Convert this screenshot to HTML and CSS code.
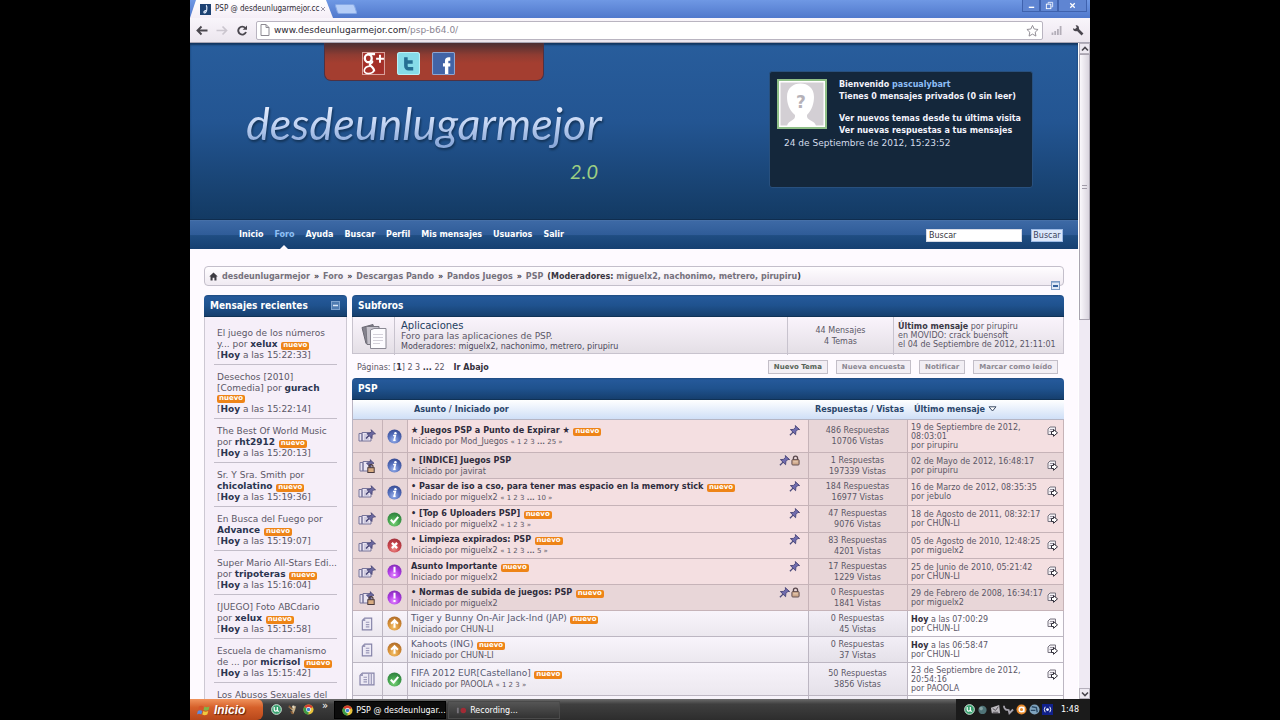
FILE: index.html
```html
<!DOCTYPE html>
<html lang="es">
<head>
<meta charset="utf-8">
<title>PSP @ desdeunlugarmejor.com</title>
<link rel="stylesheet" href="styles.css">
</head>
<body>
<svg class="defs" aria-hidden="true">
  <defs>
    <radialGradient id="g-blue" cx=".45" cy=".75" r=".8"><stop offset="0" stop-color="#9db4ee"/><stop offset=".5" stop-color="#5570bd"/><stop offset="1" stop-color="#33458c"/></radialGradient>
    <radialGradient id="g-green" cx=".45" cy=".75" r=".8"><stop offset="0" stop-color="#7fd67c"/><stop offset=".5" stop-color="#43a24d"/><stop offset="1" stop-color="#2c7a3c"/></radialGradient>
    <radialGradient id="g-red" cx=".45" cy=".75" r=".8"><stop offset="0" stop-color="#ee8a86"/><stop offset=".5" stop-color="#c9434b"/><stop offset="1" stop-color="#9c2f3a"/></radialGradient>
    <radialGradient id="g-violet" cx=".45" cy=".75" r=".8"><stop offset="0" stop-color="#e58cff"/><stop offset=".5" stop-color="#b03be6"/><stop offset="1" stop-color="#7c2aae"/></radialGradient>
    <radialGradient id="g-orange" cx=".45" cy=".75" r=".8"><stop offset="0" stop-color="#f6c46c"/><stop offset=".5" stop-color="#d68f35"/><stop offset="1" stop-color="#a8672a"/></radialGradient>
  </defs>
  <symbol id="i-info" viewBox="0 0 16 16"><circle cx="8" cy="8" r="7.5" fill="url(#g-blue)"/><circle cx="9" cy="4.4" r="1.3" fill="#fff"/><path d="M6.5 7h2.4L7.6 12h1.6" fill="none" stroke="#fff" stroke-width="1.7"/></symbol>
  <symbol id="i-ok" viewBox="0 0 16 16"><circle cx="8" cy="8" r="7.5" fill="url(#g-green)"/><path d="M4 8.2l3 3 5-6" fill="none" stroke="#fff" stroke-width="2.2"/></symbol>
  <symbol id="i-no" viewBox="0 0 16 16"><circle cx="8" cy="8" r="7.5" fill="url(#g-red)"/><path d="M5.2 5.2l5.6 5.6M10.8 5.2l-5.6 5.6" stroke="#fff" stroke-width="2.4"/></symbol>
  <symbol id="i-bang" viewBox="0 0 16 16"><circle cx="8" cy="8" r="7.5" fill="url(#g-violet)"/><path d="M8 3v6M8 10.6v2.2" stroke="#fff" stroke-width="2.2"/></symbol>
  <symbol id="i-up" viewBox="0 0 16 16"><circle cx="8" cy="8" r="7.5" fill="url(#g-orange)"/><path d="M8 12.6V5M4.4 8.2L8 4.4l3.6 3.8" fill="none" stroke="#fff" stroke-width="2.2"/></symbol>
  <symbol id="i-pin" viewBox="0 0 12 12"><path d="M1 11.2l4-4" stroke="#4b4a7c" stroke-width="1.4"/><path d="M1.500 5l3.500-.2 2.200-2.400-.4-1.800L11.600 5l-1.900-.2-2.200 2.400-.3 3.400z" fill="#6f6bae" stroke="#3f3d70" stroke-width=".9"/></symbol>
  <symbol id="i-lock" viewBox="0 0 10 12"><path d="M2.700 6V3.400a2.300 2.300 0 0 1 4.600 0V6" fill="none" stroke="#57454a" stroke-width="1.500"/><rect x="1" y="5" width="8" height="6" rx="1" fill="#cfa98c" stroke="#57454a"/><path d="M2.500 7.500h5" stroke="#ecd5c0"/></symbol>
  <symbol id="i-sticky" viewBox="0 0 18 14"><path d="M1 4.500h3V12H1zM4 3.500h9V12H4z" fill="#e9e4f2" stroke="#77749a"/><path d="M6 6h4M6 8h3M6 10h5" stroke="#b7b3cc"/><path d="M8 9.500l3-3" stroke="#3f3d70" stroke-width="1.300"/><path d="M9 4.600l3-.3L13.500 2.500l-.3-1.800L17.500 5l-1.700-.2-1.600 1.700-.3 3z" fill="#6a679e" stroke="#3f3d70" stroke-width=".8"/></symbol>
  <symbol id="i-stickylock" viewBox="0 0 18 14"><path d="M2 3.500h3V12H2zM5 2.500h8V12H5z" fill="#e9e4f2" stroke="#77749a"/><path d="M8.500 4l2.500-.3L12.500 2l-.3-1.300L16 4.400l-1.500-.2-1.600 1.600-.3 2.700z" fill="#6a679e" stroke="#3f3d70" stroke-width=".8"/><path d="M11 9V7.600a2 2 0 0 1 4 0V9" fill="none" stroke="#4a3a3c" stroke-width="1.200"/><rect x="9.800" y="8.700" width="6.400" height="4.800" fill="#d8ac82" stroke="#4a3a3c"/></symbol>
  <symbol id="i-doc" viewBox="0 0 10 12"><path d="M3 1h6v10H1V3z" fill="#edeaf5" stroke="#8583a8"/><path d="M1 3h2V1M4 4.500h3M4 6.500h3M4 8.500h3" fill="none" stroke="#9a98b8"/></symbol>
  <symbol id="i-docs" viewBox="0 0 14 12"><path d="M3 1h10v10H1V3z" fill="#edeaf5" stroke="#8583a8"/><path d="M1 3h2V1M8.500 1v10M10.700 1v10M4 4.500h3M4 6.500h3M4 8.500h3" fill="none" stroke="#9a98b8"/></symbol>
  <symbol id="i-last" viewBox="0 0 11 11"><path d="M3 1h5.500v7.500H1V3z" fill="#f3f0f5" stroke="#77737f"/><path d="M3 3.500h4M2.500 5.500h2" stroke="#9a96a2"/><path d="M4.500 5.500h2V3.500l4 3.300-4 3.500V8.500h-2z" fill="#fff" stroke="#2e2c38"/></symbol>
  <symbol id="i-chrome" viewBox="0 0 12 12"><circle cx="6" cy="6" r="5.500" fill="#e8c33a"/><path d="M6 6L1.200 3.300A5.500 5.500 0 0 1 10.800 3.300z" fill="#d63c30"/><path d="M6 6L1.200 3.300A5.500 5.500 0 0 0 6 11.500z" fill="#3c9c48"/><circle cx="6" cy="6" r="2.600" fill="#fff"/><circle cx="6" cy="6" r="1.900" fill="#3e7fd0"/></symbol>
  <symbol id="i-ut" viewBox="0 0 12 12"><circle cx="6" cy="6" r="5.300" fill="#37a06e" stroke="#dff3e8"/><path d="M3.500 3.200v3c0 2 2.800 2 3.400.4V3.200M6.900 6c0 1.600.6 2.200 2 1.800" fill="none" stroke="#fff" stroke-width="1.300"/></symbol>
  <symbol id="i-collapse" viewBox="0 0 9 9"><rect x=".5" y=".5" width="8" height="8" fill="#dfe9f6" stroke="#7d9cc4"/><path d="M1 1.500h7" stroke="#9db8da"/><path d="M2 5h5" stroke="#34619c" stroke-width="2"/></symbol>
</svg>

<div class="window">
  <div class="titlebar">
    <div class="tab">
      <svg class="favicon" viewBox="0 0 12 12"><rect width="12" height="12" fill="#1d4272"/><path d="M6.500 1.500c1.500.5 1 3 .8 5S5.500 10.500 4.500 9.500 5.500 7 7 7" fill="none" stroke="#dfe9fa" stroke-width="1.300"/></svg>
      <span class="tab-title">PSP @ desdeunlugarmejor.cc</span>
      <svg class="tab-close" viewBox="0 0 6 6"><path d="M1 1l4 4M5 1L1 5" stroke="#9a96a6"/></svg>
    </div>
    <div class="newtab"></div>
    <div class="winbtns">
      <button aria-label="Minimizar"><svg viewBox="0 0 10 10"><path d="M2 7h6" stroke="#fff" stroke-width="1.500"/></svg></button>
      <button aria-label="Restaurar"><svg viewBox="0 0 10 10"><path d="M3.500 3V1.500h5v5H7" fill="none" stroke="#e8efff"/><rect x="1.500" y="3.500" width="5" height="5" fill="none" stroke="#fff"/></svg></button>
      <button aria-label="Cerrar" class="wide"><svg viewBox="0 0 10 10"><path d="M2.500 2.500l5 5M7.500 2.500l-5 5" stroke="#fff" stroke-width="1.400"/></svg></button>
    </div>
  </div>

  <div class="toolbar">
    <button aria-label="Atrás"><svg viewBox="0 0 12 10"><path d="M11.500 5H2M5.500 1L1.500 5l4 4" fill="none" stroke="#4a474e" stroke-width="1.900"/></svg></button>
    <button aria-label="Adelante"><svg viewBox="0 0 12 10"><path d="M.5 5H10M6.500 1l4 4-4 4" fill="none" stroke="#cbc6cf" stroke-width="1.700"/></svg></button>
    <button aria-label="Recargar"><svg viewBox="0 0 12 11"><path d="M9.300 3A4 4 0 1 0 10 7" fill="none" stroke="#4a474e" stroke-width="1.900"/><path d="M11 .5v4.300H6.700z" fill="#4a474e"/></svg></button>
    <div class="address">
      <svg class="page-ico" viewBox="0 0 10 12"><path d="M1 .5h5l3 3v8H1zM6 .5v3h3" fill="#fff" stroke="#8d8a92"/></svg>
      <span class="url">www.desdeunlugarmejor.com<span class="path">/psp-b64.0/</span></span>
      <svg class="star" viewBox="0 0 14 13"><path d="M7 1l1.800 3.900 4.200.5-3.100 2.900.8 4.200L7 10.400l-3.700 2.100.8-4.200L1 5.400l4.200-.5z" fill="#fff" stroke="#8a878f"/></svg>
    </div>
    <svg class="bars" viewBox="0 0 11 9"><path d="M1.500 9V6.500M4.200 9V5M6.900 9V3M9.600 9V0" stroke="#b3aeb8" stroke-width="1.800"/></svg>
    <svg class="wrench" viewBox="0 0 12 12"><path d="M4.500 4.500l6 6" stroke="#4a474e" stroke-width="2.600"/><path d="M3.600 1.200A3 3 0 1 1 1 4.200l2 .9 1.800-1.600z" fill="#4a474e"/></svg>
  </div>

  <div class="viewport">
    <div class="page">
      <header class="header">
        <div class="social">
          <a href="#" aria-label="Google+"><svg viewBox="0 0 22 22"><rect x=".5" y=".5" width="21" height="21" fill="#a52f28" stroke="#d9a29c"/><ellipse cx="6" cy="6" rx="3.300" ry="3.800" fill="none" stroke="#fff" stroke-width="2.200"/><path d="M5 2h7.500M9.500 8.500c1.500 2-3.500 2.500-1.500 4.500 2 1.500 4 3 3.500 5.500" fill="none" stroke="#fff" stroke-width="2.200"/><path d="M7.500 13.500C1.500 14 0 20.500 6 20.500c3 0 5-1 5.500-3" fill="none" stroke="#fff" stroke-width="1.500"/><path d="M13.500 6.500H21M17.200 2.700v7.600" stroke="#fff" stroke-width="1.900"/></svg></a>
          <a href="#" aria-label="Twitter"><svg viewBox="0 0 22 22"><rect x=".5" y=".5" width="21" height="21" rx="2" fill="#86dbe8" stroke="#b9f0f5"/><path d="M8.500 5v8.500a2.500 2.500 0 0 0 2.500 2.500h4.500M8.500 9.500h6.500" fill="none" stroke="#256f93" stroke-width="3.400"/></svg></a>
          <a href="#" aria-label="Facebook"><svg viewBox="0 0 22 22"><rect x=".5" y=".5" width="21" height="21" rx="1" fill="#4264a6" stroke="#8ea5d0"/><path d="M17.500 6.700h-1.500q-2 0-2 2V21M10.500 12.300h7" fill="none" stroke="#fff" stroke-width="3.200"/></svg></a>
        </div>
        <div class="brand">
          <a href="#" class="logo">desdeunlugarmejor</a>
          <span class="version">2.0</span>
        </div>
        <div class="userbox">
          <svg class="avatar" viewBox="0 0 50 50"><rect x="1" y="1" width="48" height="48" fill="#fff" stroke="#8fbf87" stroke-width="2"/><rect x="3.500" y="3.500" width="43" height="43" fill="#d3cfd4"/><path d="M10 47c1-6 9-5 8-11-6-5-8-12-8-18C10 9 16 4.500 23.500 4.500S37 9 37 18c0 6-2 13-7 18-1 6 8 5 9 11z" fill="#fff"/><text x="24" y="29" text-anchor="middle" class="qmark">?</text></svg>
          <div class="welcome">
            <p>Bienvenido <a href="#">pascualybart</a></p>
            <p>Tienes 0 mensajes privados (0 sin leer)</p>
            <p class="gap">Ver nuevos temas desde tu última visita</p>
            <p>Ver nuevas respuestas a tus mensajes</p>
          </div>
          <p class="date">24 de Septiembre de 2012, 15:23:52</p>
        </div>
      </header>

      <nav class="nav">
        <a href="#">Inicio</a><a href="#" class="active">Foro</a><a href="#">Ayuda</a><a href="#">Buscar</a><a href="#">Perfil</a><a href="#">Mis mensajes</a><a href="#">Usuarios</a><a href="#">Salir</a>
        <form class="search"><input type="text" value="Buscar" aria-label="Buscar"><button type="button">Buscar</button></form>
      </nav>

      <div class="content">
        <div class="crumbs">
          <svg viewBox="0 0 10 10"><path d="M5 .5L.3 5h1.400v4.500h2.300v-3h2v3h2.300V5h1.400z" fill="#3d3b42"/></svg>
          <a href="#">desdeunlugarmejor</a><b>»</b><a href="#">Foro</a><b>»</b><a href="#">Descargas Pando</a><b>»</b><a href="#">Pandos Juegos</a><b>»</b><a href="#">PSP</a>
          <span class="mods"><b>(Moderadores:</b> <a href="#">miguelx2</a>, <a href="#">nachonimo</a>, <a href="#">metrero</a>, <a href="#">pirupiru</a><b>)</b></span>
          <svg class="collapse-all"><use href="#i-collapse"/></svg>
        </div>

        <div class="columns">
          <aside class="sidebar">
            <h3 class="bar">Mensajes recientes <svg class="mini" viewBox="0 0 9 9"><rect x=".5" y=".5" width="8" height="8" fill="#4f7cb2" stroke="#7ea3cf"/><path d="M2 4.500h5" stroke="#dbe8f8" stroke-width="1.500"/></svg></h3>
            <ul class="recent">
              <li>El juego de los números<br>y... por <b>xelux</b> <i class="new">nuevo</i><br><small>[<b>Hoy</b> a las 15:22:33]</small></li>
              <li>Desechos [2010]<br>[Comedia] por <b>gurach</b><br><i class="new alone">nuevo</i><small>[<b>Hoy</b> a las 15:22:14]</small></li>
              <li>The Best Of World Music<br>por <b>rht2912</b> <i class="new">nuevo</i><br><small>[<b>Hoy</b> a las 15:20:13]</small></li>
              <li>Sr. Y Sra. Smith por<br><b>chicolatino</b> <i class="new">nuevo</i><br><small>[<b>Hoy</b> a las 15:19:36]</small></li>
              <li>En Busca del Fuego por<br><b>Advance</b> <i class="new">nuevo</i><br><small>[<b>Hoy</b> a las 15:19:07]</small></li>
              <li>Super Mario All-Stars Edi...<br>por <b>tripoteras</b> <i class="new">nuevo</i><br><small>[<b>Hoy</b> a las 15:16:04]</small></li>
              <li>[JUEGO] Foto ABCdario<br>por <b>xelux</b> <i class="new">nuevo</i><br><small>[<b>Hoy</b> a las 15:15:58]</small></li>
              <li>Escuela de chamanismo<br>de ... por <b>micrisol</b> <i class="new">nuevo</i><br><small>[<b>Hoy</b> a las 15:15:42]</small></li>
              <li>Los Abusos Sexuales del</li>
            </ul>
          </aside>

          <main class="main">
            <h3 class="bar">Subforos</h3>
            <div class="subforum">
              <div class="sf-icon"><svg viewBox="0 0 26 26"><path d="M1 4l11-3 3 16-10 3z" fill="#85838e" stroke="#6a6873"/><path d="M5 3h13v18H6z" fill="#c4c1ca" stroke="#77757f"/><path d="M9.500 6.500L13 5h12v20H9.500z" fill="#fdfcff" stroke="#8b8994"/><path d="M12 11h10M12 14h10M12 17h10M12 20h7" stroke="#d4d1da"/></svg></div>
              <div class="sf-info"><a href="#" class="sf-name">Aplicaciones</a><p class="sf-desc">Foro para las aplicaciones de PSP.</p><p class="sf-mods">Moderadores: <a href="#">miguelx2</a>, <a href="#">nachonimo</a>, <a href="#">metrero</a>, <a href="#">pirupiru</a></p></div>
              <div class="sf-stats">44 Mensajes<br>4 Temas</div>
              <div class="sf-last"><b>Último mensaje</b> por <a href="#">pirupiru</a><br>en <a href="#">MOVIDO: crack buensoft</a><br>el 04 de Septiembre de 2012, 21:11:01</div>
            </div>

            <div class="pager">
              <span>Páginas: [<b>1</b>] <a href="#">2</a> <a href="#">3</a> <b>...</b> <a href="#">22</a></span><a href="#" class="down">Ir Abajo</a>
              <div class="actions"><button class="strong">Nuevo Tema</button><button>Nueva encuesta</button><button>Notificar</button><button>Marcar como leído</button></div>
            </div>

            <h3 class="bar">PSP</h3>
            <table class="topics">
              <colgroup><col class="c-ico"><col class="c-type"><col><col class="c-stats"><col class="c-last"></colgroup>
              <thead><tr><th></th><th></th><th class="left">Asunto / Iniciado por</th><th>Respuestas / Vistas</th><th class="left">Último mensaje <svg class="sort" viewBox="0 0 9 6"><path d="M1 .8h7L4.500 5z" fill="#fff" stroke="#3b4a63"/></svg></th></tr></thead>
              <tbody>
              <tr class="sticky tall"><td class="ico"><svg><use href="#i-sticky"/></svg></td><td class="type"><svg><use href="#i-info"/></svg></td><td class="subj"><span class="flags"><svg class="pin"><use href="#i-pin"/></svg></span><a href="#">★ Juegos PSP a Punto de Expirar ★</a> <i class="new">nuevo</i><p>Iniciado por <a href="#">Mod_Juegos</a> <span class="pg">« 1 2 3 <b>...</b> 25 »</span></p></td><td class="stats">486 Respuestas<br>10706 Vistas</td><td class="last"><svg><use href="#i-last"/></svg>19 de Septiembre de 2012,<br>08:03:01<br>por <a href="#">pirupiru</a></td></tr>
              <tr class="sticky locked"><td class="ico"><svg><use href="#i-stickylock"/></svg></td><td class="type"><svg><use href="#i-info"/></svg></td><td class="subj"><span class="flags"><svg class="pin"><use href="#i-pin"/></svg><svg class="lock"><use href="#i-lock"/></svg></span><a href="#">• [INDICE] Juegos PSP</a><p>Iniciado por <a href="#">javirat</a></p></td><td class="stats">1 Respuestas<br>197339 Vistas</td><td class="last"><svg><use href="#i-last"/></svg>02 de Mayo de 2012, 16:48:17<br>por <a href="#">pirupiru</a></td></tr>
              <tr class="sticky mid"><td class="ico"><svg><use href="#i-sticky"/></svg></td><td class="type"><svg><use href="#i-info"/></svg></td><td class="subj"><span class="flags"><svg class="pin"><use href="#i-pin"/></svg></span><a href="#">• Pasar de iso a cso, para tener mas espacio en la memory stick</a> <i class="new">nuevo</i><p>Iniciado por <a href="#">miguelx2</a> <span class="pg">« 1 2 3 <b>...</b> 10 »</span></p></td><td class="stats">184 Respuestas<br>16977 Vistas</td><td class="last"><svg><use href="#i-last"/></svg>16 de Marzo de 2012, 08:35:35<br>por <a href="#">jebulo</a></td></tr>
              <tr class="sticky mid"><td class="ico"><svg><use href="#i-sticky"/></svg></td><td class="type"><svg><use href="#i-ok"/></svg></td><td class="subj"><span class="flags"><svg class="pin"><use href="#i-pin"/></svg></span><a href="#">• [Top 6 Uploaders PSP]</a> <i class="new">nuevo</i><p>Iniciado por <a href="#">miguelx2</a> <span class="pg">« 1 2 3 »</span></p></td><td class="stats">47 Respuestas<br>9076 Vistas</td><td class="last"><svg><use href="#i-last"/></svg>18 de Agosto de 2011, 08:32:17<br>por <a href="#">CHUN-LI</a></td></tr>
              <tr class="sticky"><td class="ico"><svg><use href="#i-sticky"/></svg></td><td class="type"><svg><use href="#i-no"/></svg></td><td class="subj"><span class="flags"><svg class="pin"><use href="#i-pin"/></svg></span><a href="#">• Limpieza expirados: PSP</a> <i class="new">nuevo</i><p>Iniciado por <a href="#">miguelx2</a> <span class="pg">« 1 2 3 <b>...</b> 5 »</span></p></td><td class="stats">83 Respuestas<br>4201 Vistas</td><td class="last"><svg><use href="#i-last"/></svg>05 de Agosto de 2010, 12:48:25<br>por <a href="#">miguelx2</a></td></tr>
              <tr class="sticky"><td class="ico"><svg><use href="#i-sticky"/></svg></td><td class="type"><svg><use href="#i-bang"/></svg></td><td class="subj"><span class="flags"><svg class="pin"><use href="#i-pin"/></svg></span><a href="#">Asunto Importante</a> <i class="new">nuevo</i><p>Iniciado por <a href="#">miguelx2</a></p></td><td class="stats">17 Respuestas<br>1229 Vistas</td><td class="last"><svg><use href="#i-last"/></svg>25 de Junio de 2010, 05:21:42<br>por <a href="#">CHUN-LI</a></td></tr>
              <tr class="sticky locked"><td class="ico"><svg><use href="#i-stickylock"/></svg></td><td class="type"><svg><use href="#i-bang"/></svg></td><td class="subj"><span class="flags"><svg class="pin"><use href="#i-pin"/></svg><svg class="lock"><use href="#i-lock"/></svg></span><a href="#">• Normas de subida de juegos: PSP</a> <i class="new">nuevo</i><p>Iniciado por <a href="#">miguelx2</a></p></td><td class="stats">0 Respuestas<br>1841 Vistas</td><td class="last"><svg><use href="#i-last"/></svg>29 de Febrero de 2008, 16:34:17<br>por <a href="#">miguelx2</a></td></tr>
              <tr><td class="ico"><svg><use href="#i-doc"/></svg></td><td class="type"><svg><use href="#i-up"/></svg></td><td class="subj"><a href="#">Tiger y Bunny On-Air Jack-Ind (JAP)</a> <i class="new">nuevo</i><p>Iniciado por <a href="#">CHUN-LI</a></p></td><td class="stats">0 Respuestas<br>45 Vistas</td><td class="last"><svg><use href="#i-last"/></svg><b>Hoy</b> a las 07:00:29<br>por <a href="#">CHUN-LI</a></td></tr>
              <tr><td class="ico"><svg><use href="#i-doc"/></svg></td><td class="type"><svg><use href="#i-up"/></svg></td><td class="subj"><a href="#">Kahoots (ING)</a> <i class="new">nuevo</i><p>Iniciado por <a href="#">CHUN-LI</a></p></td><td class="stats">0 Respuestas<br>37 Vistas</td><td class="last"><svg><use href="#i-last"/></svg><b>Hoy</b> a las 06:58:47<br>por <a href="#">CHUN-LI</a></td></tr>
              <tr class="tall"><td class="ico"><svg><use href="#i-docs"/></svg></td><td class="type"><svg><use href="#i-ok"/></svg></td><td class="subj"><a href="#">FIFA 2012 EUR[Castellano]</a> <i class="new">nuevo</i><p>Iniciado por <a href="#">PAOOLA</a> <span class="pg">« 1 2 3 »</span></p></td><td class="stats">50 Respuestas<br>3856 Vistas</td><td class="last"><svg><use href="#i-last"/></svg>23 de Septiembre de 2012,<br>20:54:16<br>por <a href="#">PAOOLA</a></td></tr>
              <tr><td></td><td></td><td></td><td class="stats"></td><td class="last"></td></tr>
              </tbody>
            </table>
          </main>
        </div>
      </div>
    </div>
    <div class="scrollbar">
      <div class="sb-btn"><svg viewBox="0 0 8 6"><path d="M1 4.500L4 1.500l3 3" fill="none" stroke="#4a474e" stroke-width="1.600"/></svg></div>
      <div class="thumb"><i></i></div>
      <div class="sb-btn end"><svg viewBox="0 0 8 6"><path d="M1 1.500l3 3 3-3" fill="none" stroke="#4a474e" stroke-width="1.600"/></svg></div>
    </div>
  </div>

  <div class="taskbar">
    <button class="start"><svg viewBox="0 0 14 12"><path d="M2 2.500c1.500-1 3-1 4.500 0L5.500 6C4 5 2.500 5 1 6z" fill="#d5552a"/><path d="M7.500 2.500c1.500 1 3 1 5 0L11.500 6c-2 1-3.500 1-5 0z" fill="#7fb64a"/><path d="M.8 7c1.500-1 3-1 4.500 0L4.300 10.500c-1.500-1-3-1-4.300 0z" fill="#5c8be0"/><path d="M6.300 7c1.500 1 3 1 5 0l-1 3.500c-2 1-3.500 1-5 0z" fill="#f0c93e"/></svg>Inicio</button>
    <div class="quick">
      <svg><use href="#i-ut"/></svg>
      <svg viewBox="0 0 12 12"><path d="M1 3l5 2 4-3-1 4-2 5H5l1-4z" fill="#c8b088"/><circle cx="7" cy="3" r="1.500" fill="#e8dcc0"/><path d="M2 2l3 3M4 8l3 3" stroke="#8a5c34" stroke-width="1.500"/></svg>
      <svg><use href="#i-chrome"/></svg>
    </div>
    <span class="more">»</span>
    <button class="task current"><svg><use href="#i-chrome"/></svg>PSP @ desdeunlugar...</button>
    <button class="task"><svg viewBox="0 0 12 12"><path d="M2 3v6" stroke="#77737a" stroke-width="2"/><circle cx="8" cy="6" r="3" fill="#a22b35"/></svg>Recording...</button>
    <div class="tray">
      <svg><use href="#i-ut"/></svg>
      <svg viewBox="0 0 12 12"><circle cx="6" cy="6.500" r="4.500" fill="#4f7377"/><circle cx="4.500" cy="5" r="2" fill="#85a3a4"/></svg>
      <svg viewBox="0 0 12 12"><path d="M1 4l9-3 1 9H2z" fill="#bcb9be"/><path d="M3 5l3 2 3-4M3 9h6" fill="none" stroke="#4a474e"/></svg>
      <svg viewBox="0 0 12 12"><path d="M1 2c0 4 3 5 5 4M6 6l1 4 4-4" fill="none" stroke="#a5a2ac" stroke-width="2"/></svg>
      <svg viewBox="0 0 12 12"><circle cx="6" cy="6" r="5.500" fill="#e98a2b"/><circle cx="6" cy="6" r="2.500" fill="none" stroke="#fff" stroke-width="1.600"/><path d="M8.500 3v6" stroke="#fff" stroke-width="1.600"/></svg>
      <svg viewBox="0 0 12 12"><circle cx="6" cy="6" r="5.500" fill="#7fa3bd"/><path d="M3 3l5 1 1 5M2 7h5" fill="none" stroke="#2b4a66" stroke-width="1.500"/></svg>
      <svg viewBox="0 0 12 12"><rect width="12" height="12" fill="#10208a"/><circle cx="6" cy="6" r="1.500" fill="#fff"/><path d="M3.500 3q-2 3 0 6M8.500 3q2 3 0 6" fill="none" stroke="#fff"/></svg>
      <time>1:48</time>
    </div>
  </div>
</div>
</body>
</html>
```

FILE: styles.css
```css
* { box-sizing: border-box; }
body {
  margin: 0;
  padding: 0 190px;
  background: #000;
  font-family: "DejaVu Sans", sans-serif;
  font-size: 8px;
  line-height: 11px;
  color: #5b5766;
}
p, h3, ul { margin: 0; padding: 0; }
a { color: inherit; text-decoration: none; }
button { font-family: inherit; }
svg { display: block; flex: none; }
.defs { position: absolute; width: 0; height: 0; }
.window { display: flex; flex-direction: column; height: 100vh; overflow: hidden; }

/* Browser chrome */
.titlebar {
  display: flex;
  height: 18px;
  flex: none;
  background: linear-gradient(#6f98e4, #5078cc);
}
.tab {
  display: flex;
  align-items: center;
  gap: 4px;
  width: 143px;
  padding: 0 10px;
  background: linear-gradient(#fff, #f5eef7);
  clip-path: polygon(0 100%, 6px 0, 136px 0, 100% 100%);
}
.favicon { width: 11px; height: 11px; }
.tab-title {
  width: 101px;
  white-space: nowrap;
  font: 8px/12px "DejaVu Sans Condensed", "DejaVu Sans", sans-serif;
  color: #2d2a33;
}
.tab-close { width: 6px; height: 6px; }
.newtab {
  width: 20px;
  height: 10px;
  margin: 4px 0 0 3px;
  background: #b5cdf7;
  border: 1px solid #86a8e6;
  border-radius: 2px;
  transform: skewX(18deg);
}
.winbtns { display: flex; margin-left: auto; margin-right: 3px; height: 12px; }
.winbtns button {
  display: flex;
  align-items: center;
  justify-content: center;
  width: 18px;
  padding: 0;
  background: #5f85d2;
  border: 1px solid #3f62ae;
  border-top: 0;
}
.winbtns .wide { width: 29px; }
.winbtns svg { width: 9px; height: 9px; }
.toolbar {
  display: flex;
  align-items: center;
  height: 25px;
  flex: none;
  padding: 0 6px;
  gap: 8px;
  background: linear-gradient(#f9f5fb, #ece6ee);
  border-bottom: 1px solid #a9a6b4;
}
.toolbar button { padding: 0; border: 0; background: none; }
.toolbar button svg { width: 12px; height: 11px; }
.address {
  flex: 1;
  display: flex;
  align-items: center;
  gap: 4px;
  height: 19px;
  padding: 0 3px;
  background: #fff;
  border: 1px solid #b9b4c0;
  border-radius: 2px;
}
.page-ico { width: 10px; height: 12px; }
.url { flex: 1; font-size: 9px; color: #2d2a33; }
.path { color: #8a8592; }
.star { width: 13px; height: 13px; }
.bars { width: 11px; height: 9px; margin: 0 2px 0 0; }
.wrench { width: 12px; height: 12px; }

.viewport { flex: 1; min-height: 0; display: flex; overflow: hidden; }
.page { flex: 1; min-width: 0; background: #fefaff; }
.scrollbar {
  display: flex;
  flex-direction: column;
  width: 12px;
  background: #efeaf3;
  border-left: 1px solid #fff;
}
.sb-btn {
  display: flex;
  align-items: center;
  justify-content: center;
  height: 11px;
  background: #eeeaf2;
  border: 1px solid #b5b0bb;
}
.sb-btn svg { width: 8px; height: 6px; }
.sb-btn.end { margin-top: auto; }
.thumb {
  display: flex;
  align-items: center;
  justify-content: center;
  height: 266px;
  background: linear-gradient(90deg, #faf8fc, #d9d4de);
  border: 1px solid #a9a4b0;
}
.thumb i { width: 5px; height: 4px; border: solid #a09ba8; border-width: 1px 0; }

/* Forum header */
.header {
  display: flex;
  justify-content: space-between;
  position: relative;
  height: 177px;
  padding: 28px 45px 0 56px;
  background: linear-gradient(#285d9c, #235592 45%, #133a63);
  border-bottom: 1px solid #0f2d4f;
  box-shadow: inset 0 2px 2px #12355f;
}
.social {
  position: absolute;
  top: 0;
  left: 134px;
  display: flex;
  gap: 12px;
  width: 220px;
  height: 38px;
  padding: 9px 0 0 37px;
  background: linear-gradient(#4b2f33, #8f3c32 12px, #a43e30 20px);
  border: solid #4f3142;
  border-width: 0 1px 1px;
  border-radius: 0 0 7px 7px;
}
.social svg { width: 23px; height: 23px; }
.brand { width: 360px; padding-top: 22px; }
.logo {
  display: block;
  font: italic 45px/60px Lato, sans-serif;
  background: linear-gradient(#eef3ff 15%, #c5d6f4 50%, #8ba9da 85%);
  background-clip: text;
  color: transparent;
  filter: drop-shadow(1px 2px 1px #123256);
}
.version {
  display: block;
  padding-right: 8px;
  text-align: right;
  font: italic 20px/36px Lato, sans-serif;
  color: #9dcf83;
}
.userbox {
  display: grid;
  grid-template-columns: 50px 1fr;
  align-content: start;
  column-gap: 12px;
  width: 264px;
  height: 117px;
  padding: 7px;
  background: #14273b;
  border: 1px solid #28507e;
  border-radius: 3px;
  color: #f3f3fb;
}
.avatar { width: 50px; height: 50px; }
.qmark { font: bold 17px "DejaVu Sans", sans-serif; fill: #b5b1b8; }
.welcome { font-weight: bold; line-height: 12px; white-space: nowrap; }
.welcome a { color: #8dbdf5; }
.welcome .gap { padding-top: 10px; }
.date { grid-column: 1 / -1; padding-left: 7px; line-height: 12px; color: #d3dcea; font-size: 9px; }

.nav {
  display: flex;
  align-items: center;
  gap: 11px;
  height: 29px;
  padding: 0 15px 0 49px;
  background: linear-gradient(#3d69a5, #2f5c98 50%, #1f4d82 52%, #164071);
  border-top: 1px solid #4670a8;
  font-weight: bold;
  color: #fff;
}
.nav a { position: relative; line-height: 28px; }
.nav .active { color: #8fc0f5; }
.nav .active::after {
  content: "";
  position: absolute;
  left: 50%;
  bottom: 0;
  margin-left: -4px;
  border: 4px solid transparent;
  border-top: 0;
  border-bottom-color: #fefaff;
}
.search { display: flex; gap: 9px; margin-left: auto; }
.search input {
  width: 96px;
  height: 13px;
  padding: 0 2px;
  border: 1px solid #d7dbe6;
  background: #fff;
  font: 8px/11px "DejaVu Sans", sans-serif;
  color: #3a3742;
}
.search button {
  width: 32px;
  height: 13px;
  padding: 0;
  border: 1px solid #9ebbe6;
  background: #dbe7fa;
  font-size: 8px;
  line-height: 11px;
  color: #3a4460;
}

.content { padding: 17px 14px 0; }
.crumbs {
  position: relative;
  display: flex;
  align-items: center;
  gap: 4px;
  height: 20px;
  padding: 0 4px;
  border: 1px solid #c4bfcb;
  border-radius: 4px;
  background: linear-gradient(#fffdff, #f0eaf2);
  font-weight: bold;
  color: #75717c;
}
.crumbs > svg { width: 9px; height: 9px; }
.crumbs b { color: #38353f; }
.crumbs .collapse-all { position: absolute; right: 3px; bottom: -5px; }

.columns { display: flex; gap: 5px; padding-top: 9px; }
.sidebar { width: 143px; flex: none; }
.main { flex: 1; min-width: 0; }
.bar {
  display: flex;
  align-items: center;
  justify-content: space-between;
  height: 22px;
  padding: 0 7px 0 6px;
  border-radius: 4px 4px 0 0;
  background: linear-gradient(#1f4a80, #25599a 2px, #1f528e 50%, #163f6e);
  border-bottom: 1px solid #103256;
  font: bold 10px/12px "DejaVu Sans Condensed", "DejaVu Sans", sans-serif;
  color: #fff;
}
.mini { width: 9px; height: 9px; }
.recent {
  padding: 4px 9px 20px;
  list-style: none;
  border: solid #cdc8d3;
  border-width: 0 1px;
  background: #f6eff9;
  font-size: 9px;
}
.recent li {
  padding: 7px 0 3px 3px;
  border-bottom: 1px solid #c3bdc9;
  white-space: nowrap;
}
.recent b { color: #2c3550; }
.recent small { font-size: 9px; line-height: 11px; }
.new {
  display: inline-block;
  width: 28px;
  height: 8px;
  margin-left: 1px;
  border-radius: 2px;
  background: #ee8417;
  color: #fff;
  font: bold 7px/7px "DejaVu Sans", sans-serif;
  text-align: center;
  vertical-align: 0;
}
.new.alone { display: block; margin: 1px 0 1px; }

.subforum {
  display: grid;
  grid-template-columns: 41px 1fr 106px 170px;
  height: 37px;
  border: 1px solid #c8c3ce;
  border-top: 0;
  background: linear-gradient(#faf4fc, #e4dfe6);
}
.subforum > div + div { border-left: 1px solid #c8c3ce; }
.sf-icon { display: flex; align-items: center; justify-content: center; }
.sf-icon svg { width: 26px; height: 27px; }
.sf-info { padding: 3px 6px; }
.sf-name { display: block; font-size: 10px; line-height: 11px; color: #23405f; }
.sf-desc { font-size: 9px; line-height: 10px; }
.sf-mods { line-height: 11px; font-size: 8px; color: #4a4759; }
.sf-stats { padding-top: 8px; text-align: center; }
.sf-last { padding: 5px 4px; line-height: 9px; white-space: nowrap; }
.sf-last b { color: #3b3845; }

.pager { display: flex; align-items: center; gap: 9px; height: 24px; padding: 2px 6px 0 5px; }
.pager b, .down { color: #33303c; font-weight: bold; }
.actions { display: flex; gap: 8px; margin-left: auto; }
.actions button {
  height: 14px;
  padding: 0 5px;
  border: 1px solid #c3bec8;
  background: #f2eef4;
  font-size: 7px;
  line-height: 12px;
  font-weight: bold;
  color: #8b8791;
}
.actions .strong { color: #566356; }

.topics { width: 100%; table-layout: fixed; border-collapse: separate; border-spacing: 0; border-left: 1px solid #b9b4c2; }
.c-ico { width: 30px; }
.c-type { width: 25px; }
.c-stats { width: 99px; }
.c-last { width: 156px; }
.topics th {
  height: 20px;
  padding: 0 6px;
  background: linear-gradient(#fff, #cfdff7);
  border-bottom: 1px solid #b5b5c4;
  font: bold 9px/11px "DejaVu Sans Condensed", "DejaVu Sans", sans-serif;
  color: #2b466b;
  white-space: nowrap;
}
.topics .left { text-align: left; }
.sort { display: inline-block; width: 9px; height: 6px; }
.topics td {
  height: 26px;
  padding: 0 4px 0 3px;
  border: solid #bcb6c2;
  border-width: 0 1px 1px 0;
  background: linear-gradient(#f8f4fb, #ece8ef);
  white-space: nowrap;
}
.topics .tall td { height: 33px; }
.topics .mid td { height: 27px; }
.topics .stats { text-align: center; background: linear-gradient(#f2eef6, #e5e1e9); }
.topics .last { background: #fefcff; line-height: 9px; }
.topics .sticky td { background: #f4dfe1; border-color: #c6b3b8; }
.topics .sticky .stats, .topics .sticky .ico, .topics .sticky .type, .topics .locked td { background: #e8d6d8; }
.ico svg { width: 18px; height: 14px; margin: 0 auto; }
.type svg { width: 15px; height: 15px; margin: 0 auto; }
.subj > a { font-size: 9px; color: #565a72; }
.sticky .subj > a {
  font-family: "DejaVu Sans Condensed", "DejaVu Sans", sans-serif;
  font-weight: bold;
  color: #2e2c3c;
}
.subj p { font-size: 8px; }
.pg { font-size: 7px; }
.flags { float: right; display: flex; gap: 1px; padding-right: 4px; }
.pin { width: 11px; height: 11px; }
.lock { width: 9px; height: 11px; }
.last svg { float: right; width: 11px; height: 11px; margin: 3px 1px 0 0; }
.last b { color: #33303c; }

/* Desktop taskbar */
.taskbar {
  display: flex;
  align-items: stretch;
  height: 21px;
  flex: none;
  background: linear-gradient(#6b6b6b, #3f3f3f 25%, #2d2d2d);
  font-size: 9px;
  color: #fff;
}
.start {
  display: flex;
  align-items: center;
  gap: 3px;
  width: 73px;
  padding: 0 0 0 7px;
  border: 0;
  border-radius: 0 6px 6px 0;
  background: linear-gradient(#f0935c, #d6602a 40%, #b8481b);
  font: italic bold 12px "Liberation Sans", sans-serif;
  color: #fff;
  text-shadow: 1px 1px 1px #5a2008;
}
.start svg { width: 14px; height: 12px; }
.quick { display: flex; align-items: center; gap: 5px; padding-left: 8px; }
.taskbar .quick svg, .task svg, .tray svg { width: 11px; height: 11px; }
.more { padding: 0 6px 0 8px; font-size: 10px; line-height: 14px; }
.task {
  display: flex;
  align-items: center;
  gap: 3px;
  width: 112px;
  margin: 2px 2px 1px 0;
  padding: 0 7px;
  border: 1px solid #4a4a4a;
  background: linear-gradient(#555, #333);
  font: 8px "DejaVu Sans", sans-serif;
  color: #fff;
  white-space: nowrap;
}
.task.current { background: #0c0c0c; border-color: #000; }
.tray { display: flex; align-items: center; gap: 2px; margin-left: auto; padding: 0 11px 0 8px; background: #1b1b1b; }
.tray time { padding-left: 6px; font: 8px "DejaVu Sans", sans-serif; }
```
